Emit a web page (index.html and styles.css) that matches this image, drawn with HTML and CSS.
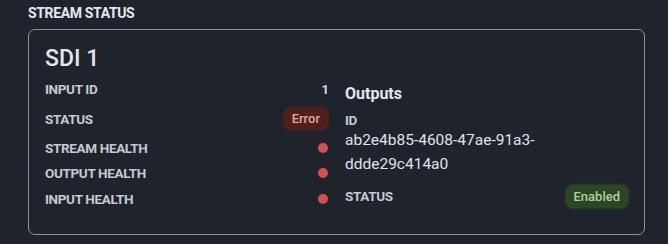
FILE: index.html
```html
<!DOCTYPE html>
<html>
<head>
<meta charset="utf-8">
<link rel="stylesheet" href="styles.css">
</head>
<body>
<div class="page">
  <div class="section-title">STREAM STATUS</div>
  <div class="card">
    <div class="card-title">SDI 1</div>
    <div class="columns">
      <div class="col-left">
        <div class="row r-id"><span class="label">INPUT ID</span><span class="value">1</span></div>
        <div class="row r-status"><span class="label">STATUS</span><span class="badge badge-error">Error</span></div>
        <div class="row r-h1"><span class="label">STREAM HEALTH</span><span class="dot"></span></div>
        <div class="row r-h2"><span class="label">OUTPUT HEALTH</span><span class="dot"></span></div>
        <div class="row r-h3"><span class="label">INPUT HEALTH</span><span class="dot"></span></div>
      </div>
      <div class="col-right">
        <div class="outputs-title">Outputs</div>
        <div class="label id-label">ID</div>
        <div class="id-value">ab2e4b85-4608-47ae-91a3-<br>ddde29c414a0</div>
        <div class="row r-out-status"><span class="label">STATUS</span><span class="badge badge-ok">Enabled</span></div>
      </div>
    </div>
  </div>
</div>
</body>
</html>
```
FILE: styles.css
```css
html, body {
  margin: 0;
  padding: 0;
  background: #1f232c;
}
body {
  font-family: Roboto, "Liberation Sans", sans-serif;
  color: #d4d7dc;
  width: 668px;
  height: 244px;
  overflow: hidden;
}
.page {
  padding: 5px 23px 0 28px;
}
.section-title {
  font-size: 14px;
  font-weight: 700;
  color: #e6e8eb;
  letter-spacing: -0.35px;
  line-height: 16px;
}
.card {
  margin-top: 8px;
  border: 1.5px solid #8b9099;
  border-radius: 7px;
  padding: 16px 16px 0 16px;
  height: 206px;
  box-sizing: border-box;
}
.card-title {
  font-size: 23px;
  font-weight: 500;
  color: #e4e6e9;
  line-height: 26px;
}
.columns {
  display: grid;
  grid-template-columns: 284px 283px;
  column-gap: 16px;
  margin-top: 9px;
}
.row {
  display: flex;
  align-items: center;
  justify-content: space-between;
}
.label {
  font-size: 13.5px;
  font-weight: 700;
  color: #c6c9cf;
  letter-spacing: -0.35px;
}
.value {
  font-size: 13px;
  font-weight: 700;
  color: #d9dce0;
}
.r-id { height: 16px; }
.r-status { height: 24px; margin-top: 10px; }
.r-h1 { height: 16px; margin-top: 9px; }
.r-h2 { height: 16px; margin-top: 9px; }
.r-h3 { height: 16px; margin-top: 10px; }
.badge {
  font-size: 13px;
  font-weight: 500;
  border-radius: 7px;
  line-height: 22px;
  padding: 0 8px;
}
.badge-error {
  background: #4e1f1b;
  color: #e0a797;
  box-shadow: 0 0 3px #6b2a20;
  margin-right: 1px;
}
.badge-ok {
  background: #2c4524;
  color: #a9d49b;
  box-shadow: 0 0 3px #3a5a2e;
  line-height: 23px;
  padding: 0 8px;
}
.dot {
  width: 10px;
  height: 10px;
  border-radius: 50%;
  background: #d5504d;
  margin-right: 1px;
}
.outputs-title {
  font-size: 16px;
  font-weight: 700;
  color: #e4e6e9;
  line-height: 20px;
  margin-top: 3px;
}
.id-label {
  margin-top: 9px;
  line-height: 14px;
}
.id-value {
  font-size: 15.5px;
  color: #e0e2e6;
  line-height: 24px;
  margin-top: 1px;
}
.r-out-status {
  margin-top: 8px;
  height: 24px;
}
```
